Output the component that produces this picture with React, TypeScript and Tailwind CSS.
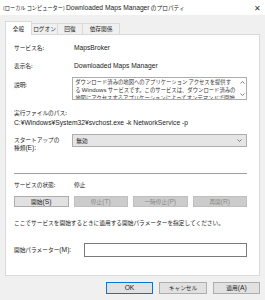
import React from "react";

const font = { fontFamily: '"Noto Sans CJK JP", "Noto Sans", sans-serif' };
const latin = { fontFamily: '"Liberation Sans", Arial, sans-serif' };

// Latin runs are set a little larger so they get the width of the original UI font
const L = ({ children, small = false }: { children: React.ReactNode; small?: boolean }) => (
  <span className={small ? "text-[6.1px]" : "text-[6.7px]"} style={latin}>
    {children}
  </span>
);

const Chevron = ({ up = false }: { up?: boolean }) => (
  <svg width="5" height="3" viewBox="0 0 5 3" className="block">
    <path
      d={up ? "M0.5 2.5 L2.5 0.5 L4.5 2.5" : "M0.5 0.5 L2.5 2.5 L4.5 0.5"}
      fill="none"
      stroke="#606060"
      strokeWidth="0.8"
    />
  </svg>
);

const Tab = ({ label, active = false, w }: { label: string; active?: boolean; w: string }) => (
  <div
    className={
      active
        ? `${w} h-[14px] flex items-center justify-center bg-white border border-b-0 border-[#d9d9d9] relative top-[1px] z-10`
        : `${w} h-[11px] flex items-center justify-center bg-[#f0f0f0] border border-b-0 border-l-0 border-[#d9d9d9]`
    }
  >
    {label}
  </div>
);

const Btn = ({ label, k, disabled = false }: { label: string; k: string; disabled?: boolean }) => (
  <div
    className={
      disabled
        ? "w-[55px] h-[11px] flex items-center justify-center bg-[#cccccc] border border-[#bfbfbf] text-[#8a8a8a]"
        : "w-[55px] h-[11px] flex items-center justify-center bg-[#e1e1e1] border border-[#adadad] text-[#222]"
    }
  >
    {label}
    <L>({k})</L>
  </div>
);

export default function App() {
  return (
    <div
      className="w-[265px] h-[300px] bg-[#f0f0f0] text-[5.7px] leading-[8px] text-[#222] overflow-hidden"
      style={font}
    >
      {/* title bar */}
      <div className="h-[15px] bg-white flex items-center justify-between pl-[3px] pr-[4px]">
        <span className="whitespace-nowrap">
          <span className="text-[5.2px]">(ローカル コンピューター) </span>
          <L>Downloaded Maps Manager</L> のプロパティ
        </span>
        <span className="text-[8px] text-[#333]">✕</span>
      </div>

      <div className="px-[5px] pt-[6px]">
        {/* tabs */}
        <div className="flex items-end h-[13px]">
          <Tab label="全般" active w="w-[27px]" />
          <Tab label="ログオン" w="w-[26px]" />
          <Tab label="回復" w="w-[25px]" />
          <Tab label="依存関係" w="w-[37px]" />
        </div>

        {/* panel */}
        <div className="h-[242px] bg-white border border-[#d9d9d9] pl-[8px] pr-[12px]">
          <div className="mt-[8px] h-[10px] flex items-center">
            <span className="w-[60px]">サービス名:</span>
            <L>MapsBroker</L>
          </div>
          <div className="mt-[8px] h-[10px] flex items-center">
            <span className="w-[60px]">表示名:</span>
            <L>Downloaded Maps Manager</L>
          </div>
          <div className="mt-[6px] flex">
            <span className="w-[59px] pt-[4px]">説明:</span>
            <div className="w-[177px] h-[23px] border border-[#adadad] flex overflow-hidden">
              <div className="flex-1 pl-[2px] overflow-hidden whitespace-nowrap text-[5.35px] text-[#333]">
                <div>ダウンロード済みの地図へのアプリケーション アクセスを提供す</div>
                <div>
                  る <L small>Windows</L> サービスです。このサービスは、ダウンロード済みの
                </div>
                <div>地図にアクセスするアプリケーションによってオンデマンドで開始</div>
              </div>
              <div className="w-[8px] flex flex-col items-center justify-between py-[3px]">
                <Chevron up />
                <Chevron />
              </div>
            </div>
          </div>
          <div className="mt-[8px] h-[10px] flex items-center">実行ファイルのパス:</div>
          <div className="h-[10px] flex items-center whitespace-nowrap">
            <L>C:¥Windows¥System32¥svchost.exe -k NetworkService -p</L>
          </div>
          <div className="mt-[6px] flex">
            <div className="w-[59px] pt-[2px]">
              <div>スタートアップの</div>
              <div>
                種類<L>(E):</L>
              </div>
            </div>
            <div className="w-[177px] h-[13px] bg-[#e5e5e5] border border-[#adadad] flex items-center justify-between pl-[3px] pr-[4px]">
              <span>無効</span>
              <Chevron />
            </div>
          </div>
          <div className="mt-[21px] h-px bg-[#a0a0a0] w-[233px]" />
          <div className="mt-[6px] h-[10px] flex items-center">
            <span className="w-[60px]">サービスの状態:</span>
            <span>停止</span>
          </div>
          <div className="mt-[6px] flex gap-[5px]">
            <Btn label="開始" k="S" />
            <Btn label="停止" k="T" disabled />
            <Btn label="一時停止" k="P" disabled />
            <Btn label="再開" k="R" disabled />
          </div>
          <div className="mt-[11px] h-[10px] flex items-center whitespace-nowrap">
            ここでサービスを開始するときに適用する開始パラメーターを指定してください。
          </div>
          <div className="mt-[15px] flex items-center">
            <span className="w-[71px]">
              開始パラメーター<L>(M):</L>
            </span>
            <div className="w-[164px] h-[14px] border border-[#7a7a7a] bg-white" />
          </div>
        </div>

        {/* footer */}
        <div className="mt-[6px] flex justify-end gap-[6px]">
          <div className="w-[47px] h-[12px] flex items-center justify-center bg-[#e1e1e1] border border-[#0078d7]">
            <L>OK</L>
          </div>
          <div className="w-[48px] h-[12px] flex items-center justify-center bg-[#e1e1e1] border border-[#adadad]">
            キャンセル
          </div>
          <div className="w-[47px] h-[12px] flex items-center justify-center bg-[#e1e1e1] border border-[#adadad]">
            適用<L>(A)</L>
          </div>
        </div>
      </div>
    </div>
  );
}
